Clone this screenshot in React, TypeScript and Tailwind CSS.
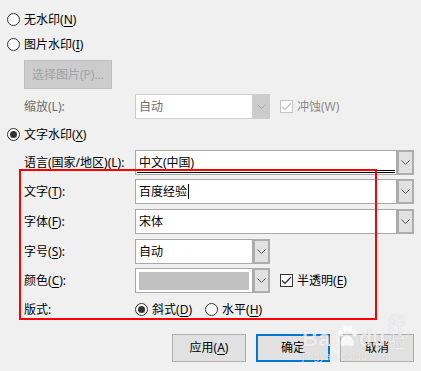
import type { ReactNode } from "react";

const FONT = "font-['Segoe_UI','Noto_Sans','Noto_Sans_CJK_SC',sans-serif]";

function Key({ k }: { k: string }) {
  return (
    <>
      (<span className="underline underline-offset-2">{k}</span>)
    </>
  );
}

function Radio({ checked, children }: { checked?: boolean; children: ReactNode }) {
  return (
    <div className="flex h-[13px] items-center">
      <span className="flex h-[13px] w-[13px] items-center justify-center rounded-full border border-[#333] bg-white">
        {checked ? <span className="h-[7px] w-[7px] rounded-full bg-[#333]" /> : null}
      </span>
      <span className="ml-[4px] leading-none whitespace-nowrap">{children}</span>
    </div>
  );
}

function Check({ disabled, children }: { disabled?: boolean; children: ReactNode }) {
  return (
    <div className={"flex items-center " + (disabled ? "text-[#8d8d8d]" : "text-black")}>
      <span
        className={
          "flex h-[13px] w-[13px] items-center justify-center border bg-white " +
          (disabled ? "border-[#c4c4c4]" : "border-[#333]")
        }
      >
        <svg width="11" height="9" viewBox="0 0 11 9" fill="none">
          <path d="M1 4.5 L4 7.5 L10 1" stroke={disabled ? "#c4c4c4" : "#222"} strokeWidth="1.2" />
        </svg>
      </span>
      <span className="ml-[4px] leading-none whitespace-nowrap">{children}</span>
    </div>
  );
}

function Chevron({ color }: { color: string }) {
  return (
    <svg width="9" height="5" viewBox="0 0 9 5" fill="none">
      <path d="M0.5 0.5 L4.5 4.5 L8.5 0.5" stroke={color} strokeWidth="1" />
    </svg>
  );
}

function Combo({
  wide,
  disabled,
  value,
  swatch,
  focus,
  caret,
}: {
  wide?: boolean;
  disabled?: boolean;
  value?: string;
  swatch?: boolean;
  focus?: boolean;
  caret?: boolean;
}) {
  return (
    <div className={"flex h-[25px] " + (wide ? "w-[279px]" : "w-[135px]")}>
      <div
        className={
          "relative flex flex-1 items-center border bg-white px-[3px] " +
          (disabled ? "border-[#cccccc] text-[#6d6d6d]" : "border-[#a8a8a8] text-black")
        }
      >
        {swatch ? <div className="h-[18px] w-full bg-[#c0c0c0]" /> : <span className="leading-none">{value}</span>}
        {caret ? <span className="ml-[1px] h-[15px] w-px bg-black" /> : null}
        {focus ? (
          <div className="absolute right-[1px] bottom-[1px] left-[1px] h-[3px] border-y border-black" />
        ) : null}
      </div>
      <div
        className={
          "flex w-[17px] items-center justify-center border-2 " +
          (disabled ? "border-[#cccccc] bg-[#cccccc]" : "border-[#adadad] bg-[#e1e1e1]")
        }
      >
        <Chevron color={disabled ? "#a8a8a8" : "#555"} />
      </div>
    </div>
  );
}

function FieldRow({ label, children }: { label: ReactNode; children: ReactNode }) {
  return (
    <div className="flex h-[25px] items-center">
      <div className="w-[128px] pl-[17px] whitespace-nowrap">{label}</div>
      {children}
    </div>
  );
}

function Btn({ children, primary }: { children: ReactNode; primary?: boolean }) {
  return (
    <div
      className={
        "flex h-[28px] w-[74px] items-center justify-center bg-[#e1e1e1] " +
        (primary ? "border-2 border-[#0078d7]" : "border border-[#adadad]")
      }
    >
      {children}
    </div>
  );
}

export default function App() {
  return (
    <div className={"relative h-[371px] w-[421px] overflow-hidden bg-[#f0f0f0] text-[12px] text-black " + FONT}>
      <div className="flex flex-col pt-[13px] pl-[7px]">
        <Radio>
          无水印<Key k="N" />
        </Radio>
        <div className="mt-[12px]">
          <Radio>
            图片水印<Key k="I" />
          </Radio>
        </div>
        <div className="mt-[9px] ml-[17px] flex h-[29px] w-[88px] items-center justify-center border border-[#bfbfbf] bg-[#cccccc] text-[#a3a3a3]">
          选择图片(P)...
        </div>
        <div className="mt-[5px]">
          <FieldRow label={<span className="text-[#6d6d6d]">缩放(L):</span>}>
            <Combo disabled value="自动" />
            <div className="ml-[10px]">
              <Check disabled>冲蚀(W)</Check>
            </div>
          </FieldRow>
        </div>
        <div className="mt-[9px]">
          <Radio checked>
            文字水印<Key k="X" />
          </Radio>
        </div>
        <div className="mt-[9px]">
          <FieldRow
            label={
              <>
                语言(国家/地区)<Key k="L" />:
              </>
            }
          >
            <Combo wide focus value="中文(中国)" />
          </FieldRow>
        </div>
        <div className="mt-[4px]">
          <FieldRow
            label={
              <>
                文字<Key k="T" />:
              </>
            }
          >
            <Combo wide caret value="百度经验" />
          </FieldRow>
        </div>
        <div className="mt-[5px]">
          <FieldRow
            label={
              <>
                字体<Key k="F" />:
              </>
            }
          >
            <Combo wide value="宋体" />
          </FieldRow>
        </div>
        <div className="mt-[5px]">
          <FieldRow
            label={
              <>
                字号<Key k="S" />:
              </>
            }
          >
            <Combo value="自动" />
          </FieldRow>
        </div>
        <div className="mt-[4px]">
          <FieldRow
            label={
              <>
                颜色<Key k="C" />:
              </>
            }
          >
            <Combo swatch />
            <div className="ml-[10px]">
              <Check>
                半透明<Key k="E" />
              </Check>
            </div>
          </FieldRow>
        </div>
        <div className="mt-[10px] flex h-[13px] items-center">
          <div className="w-[128px] pl-[17px]">版式:</div>
          <Radio checked>
            斜式<Key k="D" />
          </Radio>
          <div className="ml-[13px]">
            <Radio>
              水平<Key k="H" />
            </Radio>
          </div>
        </div>
        <div className="mt-[18px] flex gap-[10px] pl-[165px]">
          <Btn>
            应用<Key k="A" />
          </Btn>
          <Btn primary>确定</Btn>
          <Btn>取消</Btn>
        </div>
      </div>

      {/* red annotation box */}
      <div className="pointer-events-none absolute top-[169px] left-[19px] h-[151px] w-[358px] border-2 border-[#ff0000]" />

      {/* baidu watermark */}
      <div className="pointer-events-none absolute top-[314px] left-[302px] text-white/75 [text-shadow:0_0_1px_rgba(0,0,0,0.2)]">
        <div className="flex items-end leading-none">
          <span className="font-['Liberation_Sans',sans-serif] text-[22px] font-bold">Bai</span>
          <svg width="22" height="26" viewBox="0 0 22 26" className="mx-[1px]">
            <ellipse cx="4" cy="9" rx="2.5" ry="3.2" fill="rgba(255,255,255,0.75)" />
            <ellipse cx="9" cy="4" rx="2.5" ry="3.2" fill="rgba(255,255,255,0.75)" />
            <ellipse cx="14" cy="4" rx="2.5" ry="3.2" fill="rgba(255,255,255,0.75)" />
            <ellipse cx="19" cy="9" rx="2.5" ry="3.2" fill="rgba(255,255,255,0.75)" />
            <path d="M11 11 C7 11 3 17 4 21 C5 24 9 22 11 22 C13 22 17 24 18 21 C19 17 15 11 11 11 Z" fill="rgba(255,255,255,0.75)" />
          </svg>
          <span className="font-['Liberation_Sans',sans-serif] text-[22px] font-bold">du</span>
          <span className="ml-[2px] text-[18px]">经验</span>
        </div>
        <div className="mt-[2px] font-['Liberation_Sans',sans-serif] text-[10px] leading-none tracking-[0.5px]">
          jingyan.baidu.com
        </div>
      </div>
    </div>
  );
}
